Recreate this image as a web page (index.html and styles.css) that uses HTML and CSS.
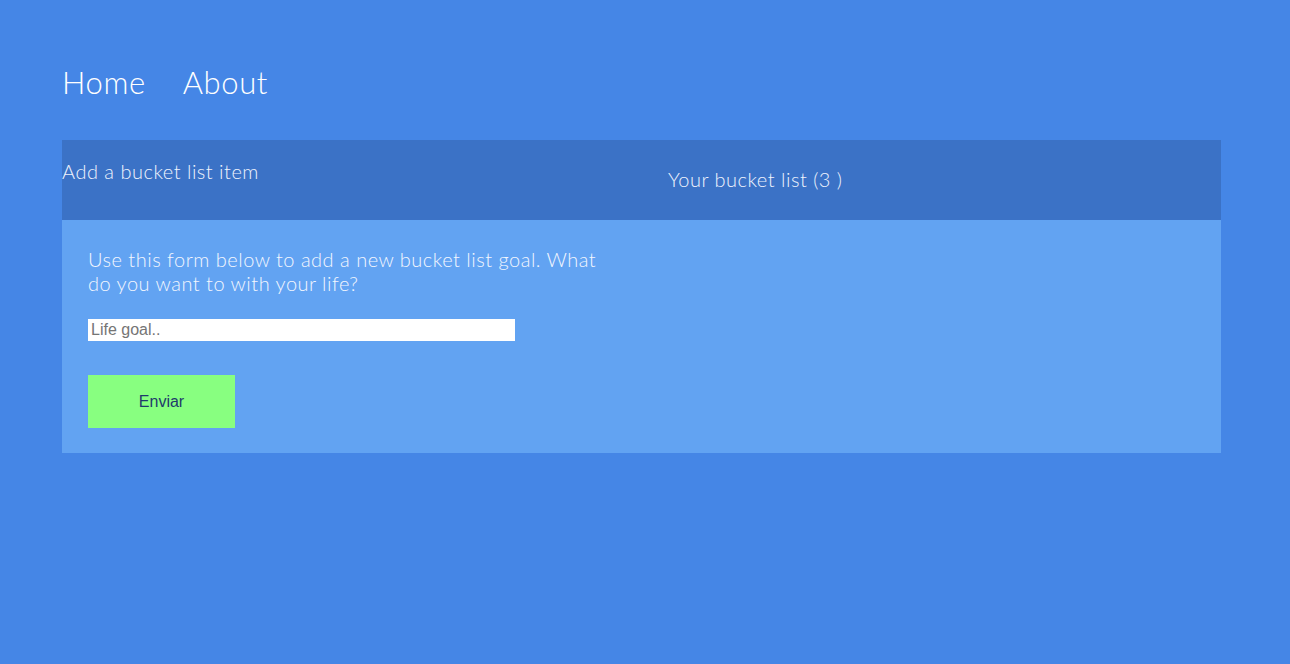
FILE: index.html
```html
<!DOCTYPE html>
<html>
<head>
<meta charset="utf-8">
<link rel="stylesheet" href="styles.css">
</head>
<body>
<nav class="nav">
  <a class="nav-link" href="#">Home</a>
  <a class="nav-link" href="#">About</a>
</nav>
<main class="panel">
  <div class="panel-head">
    <div class="head-left">Add a bucket list item</div>
    <div class="head-right">Your bucket list (3 )</div>
  </div>
  <div class="panel-body">
    <div class="col-form">
      <p class="intro">Use this form below to add a new bucket list goal. What do you want to with your life?</p>
      <input class="goal-input" type="text" placeholder="Life goal..">
      <button class="send-btn">Enviar</button>
    </div>
    <div class="col-list"></div>
  </div>
</main>
</body>
</html>
```
FILE: styles.css
```css
html, body {
  margin: 0;
  padding: 0;
}
body {
  background: #4586e6;
  font-family: Lato, "Open Sans", sans-serif;
  font-weight: 300;
  color: #ffffff;
  min-height: 664px;
}
.nav {
  display: flex;
  gap: 37px;
  padding: 64px 62px 0 62px;
  height: 140px;
  box-sizing: border-box;
}
.nav-link {
  color: #ffffff;
  text-decoration: none;
  font-size: 31px;
  line-height: 36px;
  font-weight: 300;
  letter-spacing: 0.6px;
}
.panel {
  margin: 0 69px 0 62px;
}
.panel-head {
  background: #3b72c6;
  height: 80px;
  display: grid;
  grid-template-columns: 580px 1fr;
  color: #eef3fd;
  letter-spacing: 0.5px;
}
.head-left {
  font-size: 20px;
  padding-top: 19px;
  line-height: 24px;
}
.head-right {
  font-size: 20px;
  line-height: 24px;
  padding-left: 26px;
  padding-bottom: 2px;
  align-self: center;
}
.panel-body {
  background: #62a3f2;
  display: grid;
  grid-template-columns: 580px 1fr;
  padding: 27px 0 25px 0;
}
.col-form {
  padding: 0 26px;
  display: flex;
  flex-direction: column;
  align-items: flex-start;
}
.intro {
  margin: 0;
  font-size: 20px;
  line-height: 24px;
  color: #f2f6fe;
  letter-spacing: 0.5px;
}
.goal-input {
  margin-top: 24px;
  width: 427px;
  height: 22px;
  box-sizing: border-box;
  border: none;
  outline: none;
  padding: 0 3px;
  font-family: "Liberation Sans", Arial, sans-serif;
  font-size: 16px;
  color: #333;
  background: #fff;
}
.goal-input::placeholder {
  color: #757575;
}
.send-btn {
  margin-top: 34px;
  width: 147px;
  height: 53px;
  border: none;
  background: #88ff80;
  color: #1f3a6b;
  font-family: "Liberation Sans", Arial, sans-serif;
  font-size: 16px;
  cursor: pointer;
}
```
